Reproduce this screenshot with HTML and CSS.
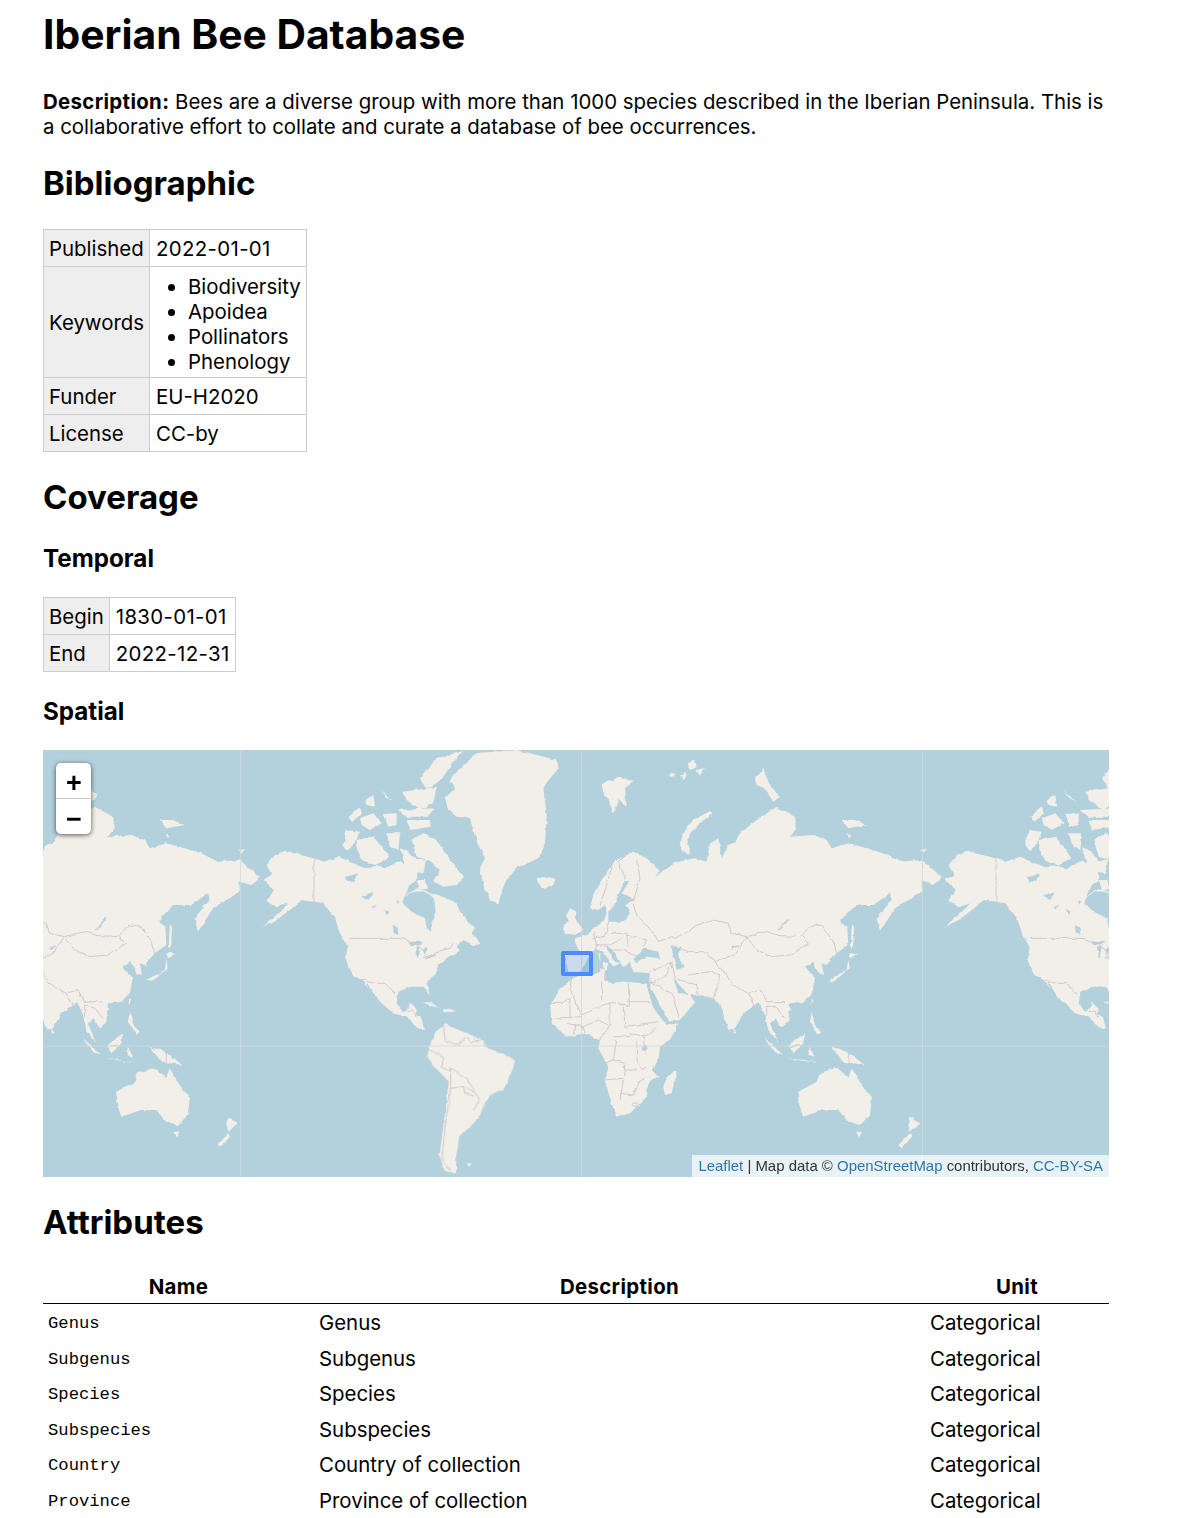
FILE: index.html
```html
<!DOCTYPE html>
<html lang="en">
<head>
<meta charset="utf-8">
<title>Iberian Bee Database</title>
<link rel="stylesheet" href="styles.css">
</head>
<body>
<main class="page">
  <h1 class="title">Iberian Bee Database</h1>
  <p class="desc"><strong>Description:</strong> Bees are a diverse group with more than 1000 species described in the Iberian Peninsula. This is a collaborative effort to collate and curate a database of bee occurrences.</p>

  <h2 class="h-bib">Bibliographic</h2>
  <table class="kv">
    <tr><th>Published</th><td class="num">2022-01-01</td></tr>
    <tr class="tight"><th>Keywords</th><td><ul><li>Biodiversity</li><li>Apoidea</li><li>Pollinators</li><li>Phenology</li></ul></td></tr>
    <tr><th>Funder</th><td>EU-H2020</td></tr>
    <tr><th>License</th><td>CC-by</td></tr>
  </table>

  <h2 class="h-cov">Coverage</h2>
  <h3 class="h-tem">Temporal</h3>
  <table class="kv">
    <tr><th>Begin</th><td class="num">1830-01-01</td></tr>
    <tr><th>End</th><td class="num">2022-12-31</td></tr>
  </table>

  <h3 class="h-spa">Spatial</h3>
  <div class="map">
    <svg class="map-svg" viewBox="43 750 1066 427" width="1066" height="427" aria-hidden="true">
      <defs>
        <filter id="rough" filterUnits="userSpaceOnUse" x="43" y="750" width="1066" height="427">
          <feTurbulence type="fractalNoise" baseFrequency="0.14" numOctaves="2" seed="4" result="n"/>
          <feDisplacementMap in="SourceGraphic" in2="n" scale="3.4" xChannelSelector="R" yChannelSelector="G"/>
          <feGaussianBlur stdDeviation="0.55"/>
        </filter>
        <g id="world">
          <!-- North America -->
          <g transform="translate(260 790) scale(.3333)">
            <path class="l" d="M20,225 L45,195 L75,182 L110,192 L160,205 L190,215 L235,200 L268,215 L310,232 L350,228 L372,238 L395,225 L420,212 L442,226 L470,240 L472,265 L450,285 L430,330 L445,310 L475,295 L510,310 L525,312 L560,325 L590,340 L600,365 L625,395 L645,410 L635,430 L662,462 L640,466 L610,450 L592,470 L600,482 L565,500 L535,525 L527,550 L500,580 L510,618 L490,590 L450,590 L415,605 L410,640 L430,665 L445,650 L450,638 L470,655 L468,672 L483,682 L492,716 L478,716 L440,682 L400,670 L365,640 L335,605 L303,570 L280,555 L258,515 L262,470 L240,430 L225,385 L190,340 L160,335 L125,330 L100,352 L50,390 L8,410 L60,365 L85,340 L50,352 L20,330 L42,300 L10,270 L35,255 Z"/>
            <path class="l" d="M250,165 L260,120 L300,125 L282,165 L262,182Z M290,150 L340,140 L365,170 L388,205 L345,225 L310,212 L292,178Z M265,82 L300,50 L306,70 L276,96Z M300,85 L340,70 L365,100 L330,120 L305,105Z M370,72 L410,70 L410,105 L385,110Z M440,90 L510,90 L512,110 L450,120Z M415,60 L520,55 L500,80 L440,80Z M430,5 L530,-10 L520,40 L480,60 L440,30Z M365,0 L400,35 L380,22Z M315,30 L340,15 L345,50 L320,45Z M380,130 L420,130 L415,180 L392,170Z M455,150 L490,130 L530,150 L570,210 L612,260 L590,285 L550,290 L520,272 L540,240 L510,212 L470,200Z M420,172 L440,180 L470,210 L498,210 L490,250 L465,245 L435,225Z M470,270 L495,270 L505,296 L480,300Z"/>
            <path class="w" d="M428,340 C430,310 470,296 500,310 L522,322 L527,365 L515,395 L517,425 L500,415 L495,385 L455,365Z M255,262 L295,250 L280,275 L262,275Z M303,320 L340,305 L325,330Z M335,350 L352,345 L340,355Z M398,405 L412,412 L415,435 L402,430Z M445,455 L490,455 L480,465 L455,465Z M470,470 L478,470 L474,505 L466,495Z M490,478 L502,470 L500,490 L492,492Z M496,505 L525,490 L530,495 L500,508Z M375,360 L385,365 L380,378Z M410,330 L418,335 L412,345Z"/>
            <path class="w-line" d="M318,578 L345,622"/>
            <path class="b" d="M162,205 L162,335 L190,345 L225,385 M265,445 L425,445 L465,460 L500,490 L490,505 L530,485 L570,475 L580,460 M303,570 L345,580 L375,580 L405,612 M440,665 L460,660 L470,682"/>
          </g>
          <!-- Greenland, Iceland, Ellesmere -->
          <g transform="translate(440 745) scale(.3333)">
            <path class="l" d="M15,160 L45,130 L30,105 L60,70 L110,25 L230,15 L350,45 L356,70 L322,110 L310,130 L320,210 L315,300 L295,340 L230,370 L195,410 L175,475 L150,465 L130,420 L120,370 L135,340 L110,290 L90,220 L50,215 L25,195Z M290,400 L320,395 L346,402 L340,420 L315,432 L295,420Z M-60,100 L-10,40 L70,18 L40,50 L0,110 L-40,130Z"/>
          </g>
          <!-- South America -->
          <g transform="translate(40 960) scale(.35714 .3378)">
            <path class="l" d="M1090,260 L1105,215 L1135,190 L1190,215 L1240,235 L1250,258 L1330,295 L1325,320 L1300,380 L1260,400 L1230,460 L1210,490 L1175,520 L1165,580 L1165,632 L1135,625 L1118,580 L1130,490 L1140,400 L1145,360 L1100,310 L1085,285Z M1070,125 L1095,125 L1117,142 L1095,135Z M1125,146 L1150,145 L1165,153 L1130,154Z M1195,600 L1210,602 L1200,608Z"/>
            <path class="b" d="M1130,195 L1135,240 L1170,250 L1195,230 L1205,245 L1240,235 M1215,230 L1225,245 M1090,265 L1130,290 L1125,315 L1150,330 M1150,320 L1195,350 L1215,385 L1230,410 L1215,445 M1150,320 L1150,380 L1135,490 L1125,590 L1150,625 M1150,380 L1185,375 L1215,390 M1185,375 L1190,395 L1215,400"/>
          </g>
          <!-- Africa and Madagascar -->
          <g transform="translate(530 900) scale(.3333)">
            <path class="l" d="M150,225 L185,226 L210,216 L212,205 L225,205 L222,240 L250,252 L265,243 L290,246 L345,250 L350,255 L370,325 L410,375 L445,370 L420,420 L390,440 L385,480 L365,510 L385,530 L355,545 L350,590 L335,605 L300,640 L260,650 L245,610 L225,545 L235,500 L205,445 L210,420 L165,400 L110,410 L65,370 L60,310 L95,265 L120,240Z M410,535 L435,510 L440,515 L425,580 L405,585 L400,560Z"/>
            <path class="w" d="M335,442 L348,438 L350,450 L338,452Z"/>
            <path class="b" d="M120,240 L125,280 L155,345 M120,295 L120,355 M60,310 L100,310 L120,295 M155,345 L200,325 L240,305 L295,320 M215,245 L215,300 M295,250 L298,320 M295,305 L360,305 M280,320 L285,380 M240,305 L240,375 L210,420 M285,380 L350,370 L385,365 M300,400 L350,410 L380,380 M250,410 L300,410 M260,420 L250,480 L225,490 M250,480 L285,490 L280,535 L225,540 M320,420 L325,490 L340,510 L350,500 M285,510 L320,510 M270,580 L310,585 L330,545 M340,410 L345,460 M75,355 L155,350 M110,370 L160,380 L165,400 M130,400 L135,375 M160,380 L205,360 L235,375 M280,540 L270,600 M320,550 L345,535 M225,220 L232,240"/>
            <circle class="b" cx="316" cy="614" r="6"/>
          </g>
          <!-- Eurasia and islands -->
          <g transform="translate(600 745) scale(.3333)">
            <path class="l" d="M-30,490 L-20,450 L10,400 L40,350 L100,320 L140,340 L180,375 L165,395 L205,365 L235,350 L285,340 L320,350 L330,295 L355,280 L365,340 L385,300 L410,290 L420,265 L470,225 L530,185 L585,215 L590,250 L570,275 L640,270 L680,285 L695,310 L745,295 L800,310 L850,325 L900,350 L965,345 L1025,395 L1000,420 L965,410 L965,440 L885,490 L840,560 L830,520 L875,465 L870,445 L820,480 L765,480 L720,528 L742,545 L745,600 L710,625 L680,660 L665,655 L672,690 L655,685 L640,650 L615,665 L645,700 L635,745 L610,770 L570,775 L565,830 L545,850 L527,820 L510,835 L535,895 L505,855 L495,810 L478,772 L430,805 L405,850 L385,855 L360,775 L340,760 L300,750 L265,750 L220,700 L235,745 L270,752 L285,772 L240,825 L205,830 L180,780 L148,715 L150,685 L100,680 L90,650 L70,670 L45,625 L15,600 L35,640 L60,655 L40,665 L10,620 L-15,612 L-30,630 L-40,650 L-60,680 L-95,680 L-105,630 L-60,625 L-75,590 L-75,580 L-40,570 L-15,545 L10,530 L20,505 L15,480 L-5,495Z"/>
            <path class="w" d="M25,500 L40,485 L75,405 L90,405 L65,445 L105,465 L75,478 L90,505 L70,530 L25,530Z M100,645 L130,610 L175,620 L180,640 L140,635 L110,655Z M215,605 L245,605 L235,635 L255,665 L230,675 L220,635Z M395,605 L420,600 L395,615Z"/>
            <path class="w-line" d="M567,520 L535,555"/>
            <path class="l" d="M-90,490 L-70,500 L-75,520 L-50,555 L-75,570 L-105,565 L-90,535 L-100,515Z M-110,540 L-90,530 L-90,550 L-110,560Z M240,300 L250,260 L280,225 L330,198 L338,205 L300,235 L270,265 L262,300 L272,328 L248,318Z M5,118 L60,95 L100,110 L75,130 L80,185 L55,165 L40,205 L25,160 L10,150Z M205,90 L225,85 L222,100Z M240,95 L255,80 L262,92 L250,105Z M262,60 L285,45 L290,65 L270,75Z M285,75 L315,70 L300,90Z M465,100 L490,70 L500,100 L515,130 L540,155 L520,170 L495,130 L470,120Z M725,225 L765,225 L800,240 L745,250Z M745,265 L755,275 L745,278Z M960,315 L982,312 L972,322Z M5,650 L25,655 L15,680Z M-5,625 L2,625 L0,650Z M755,540 L762,545 L760,600 L752,610Z M755,625 L770,625 L755,640Z M685,705 L740,675 L745,645 L750,670 L700,710Z M745,625 L770,625 L750,640Z M633,760 L640,763 L632,780Z M635,800 L645,840 L665,860 L655,870 L630,830Z M565,900 L615,865 L610,895 L580,925Z M490,875 L550,930 L525,920Z M550,940 L660,955 L610,945Z M630,905 L645,935 L625,930Z M695,905 L740,920 L795,960 L730,950Z M400,850 L410,865 L400,865Z M568,785 L575,795 L565,795Z"/>
            <path class="l" d="M595,1040 L650,1010 L660,985 L700,970 L720,975 L745,1000 L755,970 L785,1020 L815,1060 L810,1110 L780,1140 L745,1130 L715,1095 L670,1095 L610,1115 L595,1070Z M768,1160 L785,1160 L778,1178Z M928,1115 L958,1135 L932,1160 L925,1140Z M895,1200 L930,1165 L936,1175 L905,1210Z"/>
            <path class="b" d="M100,480 L110,510 L130,530 L165,570 L175,590 L215,575 L225,580 L295,540 L340,525 L385,535 L395,565 L440,575 L500,560 L540,572 L600,575 L630,545 L665,540 L700,590 L710,625 M440,575 L470,615 L515,635 L570,630 L625,595 L605,575 M215,600 L265,620 L310,620 L345,650 L400,630 L440,575 M345,650 L370,680 L400,720 L445,745 L480,735 L500,770 L555,770 M215,650 L225,700 L290,720 L295,750 M145,720 L200,690 L215,650 M330,680 L360,690 L340,760 M265,690 L330,680 M150,710 L215,745 L240,825 M445,745 L470,800 M500,815 L500,780 L530,790 L555,820 M40,350 L20,420 L0,480 M80,325 L55,350 L75,400 M110,345 L120,400 L100,470 M30,530 L15,570 L-20,580 M-20,565 L-10,600 L-15,625 M30,565 L80,565 L85,605 M-15,600 L30,600 L70,580 M30,615 L75,615 L110,635 M80,570 L140,585 L130,605 M150,680 L215,655 M745,920 L745,950 M570,905 L600,900"/>
          </g>
        </g>
      </defs>
      <rect class="sea" x="43" y="750" width="1066" height="427"/>
      <g class="tiles">
        <use href="#world" x="-682"/>
        <use href="#world"/>
        <use href="#world" x="682"/>
      </g>
      <path class="seam" d="M240.5,750 V1177 M581.5,750 V1177 M922.5,750 V1177 M43,1046 H1109"/>
      <rect class="bbox" x="563" y="953" width="28" height="21"/>
    </svg>
    <div class="zoom">
      <a class="zoom-btn">+</a>
      <a class="zoom-btn">−</a>
    </div>
    <div class="attribution"><a>Leaflet</a> | Map data © <a>OpenStreetMap</a> contributors, <a>CC-BY-SA</a></div>
  </div>

  <h2 class="h-att">Attributes</h2>
  <table class="attrs">
    <thead>
      <tr><th class="c-name">Name</th><th class="c-desc">Description</th><th class="c-unit">Unit</th></tr>
    </thead>
    <tbody>
      <tr><td><code>Genus</code></td><td>Genus</td><td>Categorical</td></tr>
      <tr><td><code>Subgenus</code></td><td>Subgenus</td><td>Categorical</td></tr>
      <tr><td><code>Species</code></td><td>Species</td><td>Categorical</td></tr>
      <tr><td><code>Subspecies</code></td><td>Subspecies</td><td>Categorical</td></tr>
      <tr><td><code>Country</code></td><td>Country of collection</td><td>Categorical</td></tr>
      <tr><td><code>Province</code></td><td>Province of collection</td><td>Categorical</td></tr>
    </tbody>
  </table>
</main>
</body>
</html>
```
FILE: styles.css
```css
* { box-sizing: border-box; }
html, body { margin: 0; background: #fff; }
body {
  font-family: Inter, "Liberation Sans", sans-serif;
  font-size: 20.4px;
  line-height: 25px;
  color: #000;
}
.page { padding: 0 87px 0 43px; }
h1, h2, h3, p { margin: 0; font-weight: 700; }
p { font-weight: 400; }
strong { letter-spacing: .35px; }
.title { font-size: 40.8px; line-height: 48px; padding-top: 10px; }
.desc { margin-top: 31px; }
h2 { font-size: 33px; line-height: 38px; }
h3 { font-size: 24.2px; line-height: 29px; }
.h-bib { margin-top: 25px; }
.kv { border-collapse: collapse; margin-top: 27px; }
.kv th, .kv td { border: 1px solid #ccc; padding: 5.5px 5px; font-weight: 400; text-align: left; }
.kv th { background: #eee; }
.kv .tight th { padding-top: 5px; padding-bottom: 5px; }
.kv .tight td { padding-top: 6.5px; padding-bottom: 3.5px; }
.kv td { padding-left: 6px; }
.num { letter-spacing: .35px; }
.kv ul { margin: 0; padding-left: 32px; }
.h-cov { margin-top: 26px; }
.h-tem { margin-top: 28px; }
.h-tem + .kv { margin-top: 24px; }
.h-spa { margin-top: 25px; }
.map { position: relative; height: 427px; margin-top: 24px; overflow: hidden; }
.map-svg { display: block; }
.sea { fill: #b3d1dd; }
.tiles { filter: url(#rough); }
.l { fill: #f2efe9; }
.w { fill: #b3d1dd; }
.w-line { fill: none; stroke: #b3d1dd; stroke-width: 1.5px; vector-effect: non-scaling-stroke; }
.b { fill: none; stroke: #d3c6cf; stroke-width: 1px; vector-effect: non-scaling-stroke; }
.seam { fill: none; stroke: #d3dadb; stroke-width: 1px; opacity: .8; }
.bbox { fill: rgba(51, 136, 255, .2); stroke: #4a8cfa; stroke-width: 4px; stroke-linejoin: round; }
.zoom {
  position: absolute; left: 13px; top: 13px; width: 35px;
  border-radius: 5px; background: #fff; box-shadow: 0 1px 5px rgba(0, 0, 0, .65);
}
.zoom-btn {
  display: block; height: 35.5px; line-height: 41px; padding-left: 1px; text-align: center;
  font-family: "Liberation Sans", sans-serif; font-size: 27px; font-weight: 700; color: #000;
}
.zoom-btn:first-child { border-bottom: 1px solid #ccc; }
.attribution {
  position: absolute; right: 0; bottom: 0; height: 22px; padding: 0 6px;
  background: rgba(255, 255, 255, .7);
  font-family: "Liberation Sans", sans-serif; font-size: 14.95px; line-height: 22px; color: #333;
}
.attribution a { color: #2e78a6; }
.h-att { margin-top: 26px; }
.attrs { border-collapse: collapse; width: 1066px; table-layout: fixed; margin-top: 33px; }
.attrs th { font-weight: 700; letter-spacing: .35px; text-align: center; padding: 0 5px 4px; border-bottom: 1px solid #000; }
.attrs td { padding: 6px 5px 4.6px; vertical-align: top; }
.c-name { width: 271px; }
.c-desc { width: 611px; }
.c-unit { width: 184px; }
code { display: block; padding-top: 3px; font-family: "Liberation Mono", monospace; font-size: 17.2px; line-height: 22px; }
```
